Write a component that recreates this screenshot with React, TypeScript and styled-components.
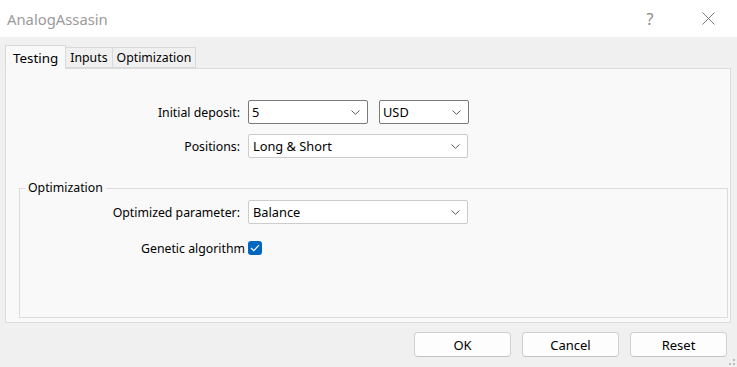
import React from "react";
import styled, { createGlobalStyle } from "styled-components";

const Global = createGlobalStyle`
  html, body { margin: 0; padding: 0; }
  body {
    background: #f0f0f0;
    font-family: "Noto Sans", "Open Sans", sans-serif;
    font-size: 12.3px;
    color: #000;
  }
`;

const Dialog = styled.div`
  position: relative;
  width: 737px;
  height: 367px;
  background: #f0f0f0;
  display: flex;
  flex-direction: column;
  overflow: hidden;
`;

const TitleBar = styled.div`
  height: 37px;
  background: #fff;
  display: flex;
  align-items: center;
  padding-left: 7px;
`;

const Title = styled.div`
  flex: 1;
  font-size: 14.8px;
  color: #9b9b9b;
`;

const TitleButton = styled.div`
  width: 58px;
  height: 37px;
  display: flex;
  align-items: center;
  justify-content: center;
  color: #8a8a8a;
  font-size: 16px;
`;

const Body = styled.div`
  flex: 1;
  display: flex;
  flex-direction: column;
  padding: 8px 6px 0 5px;
`;

const TabStrip = styled.div`
  display: flex;
  align-items: flex-end;
  height: 23px;
  position: relative;
  z-index: 1;
`;

const Tab = styled.div<{ $active?: boolean }>`
  height: ${(p) => (p.$active ? 24 : 21)}px;
  padding: 0 ${(p) => (p.$active ? 7 : 4)}px;
  display: flex;
  align-items: center;
  box-sizing: border-box;
  border: 1px solid #d9d9d9;
  border-bottom: ${(p) => (p.$active ? "none" : "1px solid #d9d9d9")};
  margin-left: ${(p) => (p.$active ? 0 : -1)}px;
  margin-bottom: ${(p) => (p.$active ? -1 : 0)}px;
  background: ${(p) => (p.$active ? "#f9f9f9" : "#f0f0f0")};
  font-size: ${(p) => (p.$active ? 13.4 : 12.3)}px;
`;

const Panel = styled.div`
  height: 255px;
  box-sizing: border-box;
  border: 1px solid #dcdcdc;
  background: #f9f9f9;
  padding: 31px 0 4px 0;
  display: flex;
  flex-direction: column;
`;

const Row = styled.div<{ $gap?: number }>`
  display: flex;
  align-items: center;
  height: 24px;
  gap: ${(p) => p.$gap ?? 8}px;
`;

const Label = styled.div<{ $w: number }>`
  width: ${(p) => p.$w}px;
  text-align: right;
  white-space: nowrap;
`;

const Combo = styled.div<{ $w: number; $edit?: boolean }>`
  width: ${(p) => p.$w}px;
  height: 24px;
  box-sizing: border-box;
  border: 1px solid ${(p) => (p.$edit ? "#7a7a7a" : "#cccccc")};
  border-radius: 2px;
  background: #fff;
  display: flex;
  align-items: center;
  padding: 0 7px 0 ${(p) => (p.$edit ? 3 : 4)}px;
  font-size: 12.8px;
`;

const ComboText = styled.span`
  flex: 1;
`;

const Rows = styled.div`
  display: flex;
  flex-direction: column;
  gap: 10px;
`;

const Group = styled.fieldset`
  margin: 21px 2px 0 13px;
  padding: 3px 0 0 0;
  height: 140px;
  box-sizing: border-box;
  border: 1px solid #dcdcdc;
  border-radius: 0;
  display: flex;
  flex-direction: column;
  gap: 12px;
`;

const Legend = styled.legend`
  padding: 0 3px;
  margin-left: 5px;
  font-size: 12.3px;
  line-height: 18px;
`;

const Check = styled.div`
  width: 14px;
  height: 14px;
  border-radius: 3px;
  background: #0067c0;
  display: flex;
  align-items: center;
  justify-content: center;
`;

const Footer = styled.div`
  display: flex;
  justify-content: flex-end;
  gap: 11px;
  padding: 9px 4px 10px 0;
`;

const Button = styled.button`
  width: 97px;
  height: 25px;
  box-sizing: border-box;
  background: #fdfdfd;
  border: 1px solid #d0d0d0;
  border-bottom-color: #c4c4c4;
  border-radius: 4px;
  font-family: inherit;
  font-size: 13px;
  color: #000;
  padding: 0;
`;

const Grip = styled.svg`
  position: absolute;
  right: 1px;
  bottom: 1px;
`;

const Chevron = () => (
  <svg width="9" height="5" viewBox="0 0 9 5">
    <path d="M0.5 0.5 L4.5 4.3 L8.5 0.5" fill="none" stroke="#5a5a5a" strokeWidth="1" />
  </svg>
);

export default function App() {
  return (
    <Dialog>
      <Global />
      <TitleBar>
        <Title>AnalogAssasin</Title>
        <TitleButton>?</TitleButton>
        <TitleButton>
          <svg width="13" height="13" viewBox="0 0 13 13">
            <path d="M0.5 0.5 L12.5 12.5 M12.5 0.5 L0.5 12.5" stroke="#7a7a7a" strokeWidth="1" />
          </svg>
        </TitleButton>
      </TitleBar>
      <Body>
        <TabStrip>
          <Tab $active>Testing</Tab>
          <Tab>Inputs</Tab>
          <Tab>Optimization</Tab>
        </TabStrip>
        <Panel>
          <Rows>
            <Row>
              <Label $w={234}>Initial deposit:</Label>
              <Row $gap={11}>
                <Combo $w={120} $edit>
                  <ComboText>5</ComboText>
                  <Chevron />
                </Combo>
                <Combo $w={90} $edit>
                  <ComboText>USD</ComboText>
                  <Chevron />
                </Combo>
              </Row>
            </Row>
            <Row>
              <Label $w={234}>Positions:</Label>
              <Combo $w={220}>
                <ComboText>Long &amp; Short</ComboText>
                <Chevron />
              </Combo>
            </Row>
          </Rows>
          <Group>
            <Legend>Optimization</Legend>
            <Row>
              <Label $w={220}>Optimized parameter:</Label>
              <Combo $w={220}>
                <ComboText>Balance</ComboText>
                <Chevron />
              </Combo>
            </Row>
            <Row $gap={3}>
              <Label $w={225}>Genetic algorithm</Label>
              <Check>
                <svg width="10" height="8" viewBox="0 0 10 8">
                  <path d="M1 4 L3.8 6.6 L9 1.2" fill="none" stroke="#fff" strokeWidth="1.2" />
                </svg>
              </Check>
            </Row>
          </Group>
        </Panel>
        <Footer>
          <Button>OK</Button>
          <Button>Cancel</Button>
          <Button>Reset</Button>
        </Footer>
      </Body>
      <Grip width="7" height="7" viewBox="0 0 7 7">
        <rect x="4" y="0" width="2" height="2" fill="#bdbdbd" />
        <rect x="0" y="4" width="2" height="2" fill="#bdbdbd" />
        <rect x="4" y="4" width="2" height="2" fill="#bdbdbd" />
      </Grip>
    </Dialog>
  );
}
